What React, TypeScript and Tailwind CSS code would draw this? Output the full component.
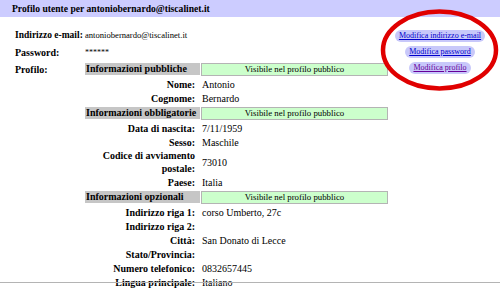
import React from 'react';

type Row = { label: string; value?: string; two?: boolean } | { section: string };

const ROWS: Row[] = [
  { section: 'Informazioni pubbliche' },
  { label: 'Nome:', value: 'Antonio' },
  { label: 'Cognome:', value: 'Bernardo' },
  { section: 'Informazioni obbligatorie' },
  { label: 'Data di nascita:', value: '7/11/1959' },
  { label: 'Sesso:', value: 'Maschile' },
  { label: 'Codice di avviamento postale:', value: '73010', two: true },
  { label: 'Paese:', value: 'Italia' },
  { section: 'Informazioni opzionali' },
  { label: 'Indirizzo riga 1:', value: 'corso Umberto, 27c' },
  { label: 'Indirizzo riga 2:' },
  { label: 'Città:', value: 'San Donato di Lecce' },
  { label: 'Stato/Provincia:' },
  { label: 'Numero telefonico:', value: '0832657445' },
  { label: 'Lingua principale:', value: 'Italiano' },
];

function ProfileTable() {
  return (
    <div className="w-[303px]">
      {ROWS.map((r, i) =>
        'section' in r ? (
          <div key={i} className="flex h-[16px] items-center gap-[1px]">
            <div className="h-[12px] w-[115px] bg-[#c6c6c6] pl-[1px] text-[10px] font-bold leading-[12px]">
              {r.section}
            </div>
            <div className="h-[13px] flex-1 border border-[#b4b4b4] bg-[#ccffcc] text-center text-[8.8px] leading-[11px]">
              Visibile nel profilo pubblico
            </div>
          </div>
        ) : (
          <div key={i} className={`flex items-center ${r.two ? 'h-[26px]' : 'h-[14px]'}`}>
            <div className="w-[115px] pr-[5px] text-right text-[10px] font-bold leading-[13px]">
              {r.two ? (
                <>
                  Codice di avviamento
                  <br />
                  postale:
                </>
              ) : (
                r.label
              )}
            </div>
            <div className="pl-[2px] text-[10px] leading-[13px]">{r.value}</div>
          </div>
        )
      )}
    </div>
  );
}

function Pill({ text, visited }: { text: string; visited?: boolean }) {
  return (
    <span className="rounded-full bg-[#c8c8fa] px-[4px] text-[8px] leading-[12px]">
      <span className={`underline ${visited ? 'text-[#660099]' : 'text-[#0000cc]'}`}>{text}</span>
    </span>
  );
}

export default function App() {
  return (
    <div className="relative h-[288px] w-[500px] overflow-hidden bg-white text-black font-[Liberation_Serif,serif]">
      <div className="h-[17px] bg-[#ccccff] pl-[12px] text-[9.6px] font-bold leading-[17px]">
        Profilo utente per antoniobernardo@tiscalinet.it
      </div>

      <div className="flex pt-[10px]">
        <div className="pl-[15px]">
          <div className="flex h-[17px] items-center">
            <div className="w-[70px] whitespace-nowrap text-[9.5px] font-bold">Indirizzo e-mail:</div>
            <div className="text-[8.6px]">antoniobernardo@tiscalinet.it</div>
          </div>
          <div className="flex h-[17px] items-center">
            <div className="w-[70px] text-[10px] font-bold">Password:</div>
            <div className="text-[8px]">******</div>
          </div>
          <div className="flex">
            <div className="w-[70px] pt-[2px] text-[10px] font-bold leading-[13px]">Profilo:</div>
            <ProfileTable />
          </div>
        </div>

        <div className="ml-[5px] flex w-[94px] flex-col items-center gap-[4px] pt-[3px]">
          <Pill text="Modifica indirizzo e-mail" />
          <Pill text="Modifica password" />
          <Pill text="Modifica profilo" visited />
        </div>
      </div>

      {/* annotation ring */}
      <svg className="absolute left-[380px] top-[9px]" width="119" height="82" viewBox="0 0 119 82">
        <ellipse cx="59.5" cy="41" rx="56.5" ry="38.5" fill="none" stroke="#e00000" strokeWidth="4.5" />
      </svg>

      <div className="absolute left-0 top-[282px] h-[1px] w-full bg-[#b4b4b4]" />
    </div>
  );
}
